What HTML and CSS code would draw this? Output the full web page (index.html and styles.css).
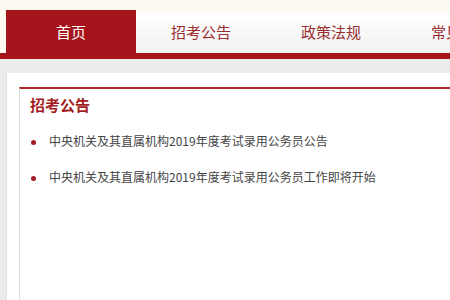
FILE: index.html
```html
<!DOCTYPE html>
<html lang="zh-CN">
<head>
    <meta charset="UTF-8">
    <meta name="viewport" content="width=device-width, initial-scale=1.0">
    <title>招考公告</title>
    <link rel="stylesheet" href="styles.css">
</head>
<body>

    <div class="topbar"></div>

    <div class="nav">
        <a class="nav-item active" href="#">首页</a>
        <a class="nav-item" href="#">招考公告</a>
        <a class="nav-item" href="#">政策法规</a>
        <a class="nav-item" href="#">常见问题</a>
    </div>

    <div class="main">
        <div class="panel">
            <div class="news-box">
                <h2 class="news-title">招考公告</h2>
                <ul class="news-list">
                    <li><a href="#">中央机关及其直属机构2019年度考试录用公务员公告</a></li>
                    <li><a href="#">中央机关及其直属机构2019年度考试录用公务员工作即将开始</a></li>
                </ul>
            </div>
        </div>
    </div>

</body>
</html>
```

FILE: styles.css
```css
*{
    box-sizing: border-box;
}

body{
    margin: 0;
    width: 450px;
    height: 300px;
    overflow: hidden;
    font-family: "Noto Sans CJK SC", "Noto Sans", sans-serif;
    background-color: #ececec;
}

a{
    text-decoration: none;
}

.topbar{
    height: 10px;
    background-color: #fdfaf1;
}

.nav{
    display: flex;
    align-items: flex-end;
    height: 49px;
    padding-left: 6px;
    background-color: #fdfaf1;
    border-bottom: 6px solid #a5151b;
    white-space: nowrap;
}

.nav-item{
    flex: 0 0 130px;
    height: 40px;
    line-height: 38px;
    text-align: center;
    font-size: 15px;
    color: #9a2d2f;
    background-image: linear-gradient(#ffffff, #f1f1f1);
}

.nav-item.active{
    height: 43px;
    line-height: 44px;
    color: #fff;
    background-image: none;
    background-color: #a5151b;
}

.main{
    padding: 14px 0 0 6px;
    height: 241px;
}

.panel{
    height: 100%;
    background-color: #fff;
    border-left: 1px solid #e2e2e2;
    padding: 14px 0 0 12px;
}

.news-box{
    height: 100%;
    border-top: 2px solid #b0282c;
    border-left: 1px solid #dcdcdc;
    padding: 4px 0 0 10px;
}

.news-title{
    margin: 0;
    font-size: 15px;
    line-height: 24px;
    font-weight: bold;
    color: #a31d23;
}

.news-list{
    list-style: none;
    margin: 6px 0 0;
    padding: 0;
}

.news-list li{
    height: 36px;
    line-height: 36px;
    font-size: 12px;
}

.news-list li::before{
    content: "";
    display: inline-block;
    width: 5px;
    height: 5px;
    border-radius: 50%;
    background-color: #a31d23;
    margin: 0 13px 0 1px;
    vertical-align: middle;
}

.news-list a{
    color: #444;
}
```
